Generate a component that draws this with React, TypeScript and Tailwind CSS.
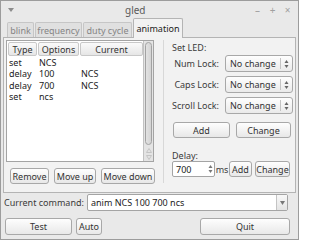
import React from 'react';

const btn =
	'flex items-center justify-center rounded-[3px] border border-[#a8a8a8] bg-linear-to-b from-[#fefefe] to-[#e8e8e8] text-[#333] h-[16px] whitespace-nowrap';

const UpDown = ({ color = '#666' }: { color?: string }) => (
	<svg width="5" height="10" viewBox="0 0 5 10">
		<path d="M2.5 1 L4.5 4 L0.5 4 Z" fill={color} />
		<path d="M2.5 9 L4.5 6 L0.5 6 Z" fill={color} />
	</svg>
);

const Combo = () => (
	<div className="flex h-[17px] w-[68px] shrink-0 items-center rounded-[3px] border border-[#a8a8a8] bg-linear-to-b from-[#fefefe] to-[#eaeaea] text-[#333]">
		<span className="flex-1 whitespace-nowrap pl-[4px]">No change</span>
		<span className="h-[11px] border-l border-[#c4c4c4]" />
		<span className="flex w-[11px] justify-center">
			<UpDown />
		</span>
	</div>
);

const rows = [
	['set', 'NCS', ''],
	['delay', '100', 'NCS'],
	['delay', '700', 'NCS'],
	['set', 'ncs', ''],
];

const tabs = [
	{ label: 'blink', w: 'w-[27px]' },
	{ label: 'frequency', w: 'w-[47px]' },
	{ label: 'duty cycle', w: 'w-[49px]' },
];

export default function App() {
	return (
		<div className="flex h-[240px] w-[299px] flex-col overflow-hidden border border-[#9c9c9c] bg-[#e9e9e9] font-['Noto_Sans','DejaVu_Sans',sans-serif] text-[9px] leading-none text-[#3a3a3a]">
			{/* title bar */}
			<div className="flex h-[17px] shrink-0 items-center">
				<span className="ml-[6px] flex w-[8px] justify-center">
					<svg width="6" height="4" viewBox="0 0 6 4">
						<path d="M0 0 L6 0 L3 4 Z" fill="#8c8c8c" />
					</svg>
				</span>
				<span className="ml-[110px] text-[10px] text-[#5a5a5a]">gled</span>
				<div className="ml-auto mr-[3px] flex text-[10px] text-[#a0a0a0]">
					<span className="w-[15px] text-center">–</span>
					<span className="w-[15px] text-center">+</span>
					<span className="w-[15px] text-center">×</span>
				</div>
			</div>

			{/* tabs */}
			<div className="flex h-[19px] shrink-0 items-end pl-[6px]">
				{tabs.map((t) => (
					<div
						key={t.label}
						className={`${t.w} mr-[1px] flex h-[15px] items-center justify-center whitespace-nowrap rounded-t-[2px] border border-b-0 border-[#c6c6c6] bg-[#e0e0e0] text-[#858585]`}
					>
						{t.label}
					</div>
				))}
				<div className="relative z-10 -mb-px flex h-[20px] w-[50px] items-center justify-center rounded-t-[2px] border border-b-0 border-[#b4b4b4] bg-[#f2f2f2] text-[#222]">
					animation
				</div>
			</div>

			{/* page */}
			<div className="mx-[2px] flex h-[156px] shrink-0 border border-[#b4b4b4] bg-[#f2f2f2] pl-[2px] pt-[2px]">
				<div className="flex flex-col">
					<div className="flex h-[122px] w-[148px] border border-[#a4a4a4] bg-white">
						<div className="flex flex-1 flex-col">
							<div className="ml-[1px] mt-[1px] flex h-[14px] gap-[1px] text-[#333]">
								<div className="flex w-[29px] items-center justify-center rounded-[2px] border border-[#c8c8c8] bg-linear-to-b from-[#fafafa] to-[#e6e6e6]">
									Type
								</div>
								<div className="flex w-[41px] items-center justify-center rounded-[2px] border border-[#c8c8c8] bg-linear-to-b from-[#fafafa] to-[#e6e6e6]">
									Options
								</div>
								<div className="flex flex-1 items-center justify-center rounded-[2px] border border-[#c8c8c8] bg-linear-to-b from-[#fafafa] to-[#e6e6e6]">
									Current
								</div>
							</div>
							<div className="flex flex-col pt-[1px] text-[#222]">
								{rows.map((r, i) => (
									<div key={i} className="flex h-[11.3px] items-center pl-[2px]">
										<span className="w-[30px]">{r[0]}</span>
										<span className="w-[42px]">{r[1]}</span>
										<span>{r[2]}</span>
									</div>
								))}
							</div>
						</div>
						<div className="flex w-[10px] flex-col border-l border-[#c2c2c2] bg-[#e4e4e4]">
							<div className="mx-[1px] mt-[1px] h-[103px] rounded-[4px] border border-[#a2a2a2] bg-linear-to-r from-[#e2e2e2] to-[#d4d4d4]" />
							<div className="mt-[3px] flex flex-col items-center gap-[2px]">
								<svg width="6" height="5" viewBox="0 0 6 5">
									<path d="M3 0.5 L5.5 4.5 L0.5 4.5 Z" fill="none" stroke="#c4c4c4" />
								</svg>
								<svg width="6" height="5" viewBox="0 0 6 5">
									<path d="M3 4.5 L5.5 0.5 L0.5 0.5 Z" fill="none" stroke="#c4c4c4" />
								</svg>
							</div>
						</div>
					</div>
					<div className="ml-[4px] mt-[6px] flex gap-[5px]">
						<div className={`${btn} w-[39px]`}>Remove</div>
						<div className={`${btn} w-[42px]`}>Move up</div>
						<div className={`${btn} w-[54px]`}>Move down</div>
					</div>
				</div>

				<div className="ml-[8px] h-[143px] border-l border-[#d8d8d8]" />

				<div className="flex w-[129px] shrink-0 flex-col pl-[8px]">
					<div className="mt-[2px] flex h-[10px] items-center">Set LED:</div>
					<div className="mt-[3px] flex flex-col gap-[4px]">
						{['Num Lock:', 'Caps Lock:', 'Scroll Lock:'].map((l) => (
							<div key={l} className="flex items-center">
								<span className="flex-1 whitespace-nowrap pr-[6px] text-right">{l}</span>
								<Combo />
							</div>
						))}
					</div>
					<div className="ml-[1px] mt-[8px] flex gap-[6px]">
						<div className={`${btn} w-[57px]`}>Add</div>
						<div className={`${btn} w-[55px]`}>Change</div>
					</div>
					<div className="mt-[12px] flex h-[10px] items-center">Delay:</div>
					<div className="mt-[1px] flex items-center">
						<div className="flex h-[16px] w-[43px] items-center rounded-[2px] border border-[#a4a4a4] bg-white text-[#222]">
							<span className="flex-1 pl-[3px]">700</span>
							<span className="flex w-[8px] justify-center">
								<UpDown color="#777" />
							</span>
						</div>
						<span className="w-[14px] text-center">ms</span>
						<div className={`${btn} w-[23px]`}>Add</div>
						<div className={`${btn} ml-[3px] w-[35px]`}>Change</div>
					</div>
				</div>
			</div>

			{/* current command */}
			<div className="mt-[1px] flex h-[17px] shrink-0 items-center pl-[3px]">
				<span className="w-[83px] whitespace-nowrap">Current command:</span>
				<div className="flex h-[17px] w-[201px] items-center rounded-[2px] border border-[#a4a4a4] bg-white">
					<span className="flex-1 pl-[3px] text-[#222]">anim NCS 100 700 ncs</span>
					<span className="flex h-full w-[11px] items-center justify-center border-l border-[#c4c4c4] bg-linear-to-b from-[#f8f8f8] to-[#e4e4e4]">
						<svg width="5" height="4" viewBox="0 0 5 4">
							<path d="M0 0 L5 0 L2.5 4 Z" fill="#777" />
						</svg>
					</span>
				</div>
			</div>

			{/* bottom buttons */}
			<div className="mt-[7px] flex shrink-0 items-center pl-[4px]">
				<div className={`${btn} h-[17px] w-[67px]`}>Test</div>
				<div className={`${btn} ml-[4px] h-[17px] w-[26px]`}>Auto</div>
				<div className={`${btn} ml-[98px] h-[17px] w-[90px]`}>Quit</div>
			</div>
		</div>
	);
}
